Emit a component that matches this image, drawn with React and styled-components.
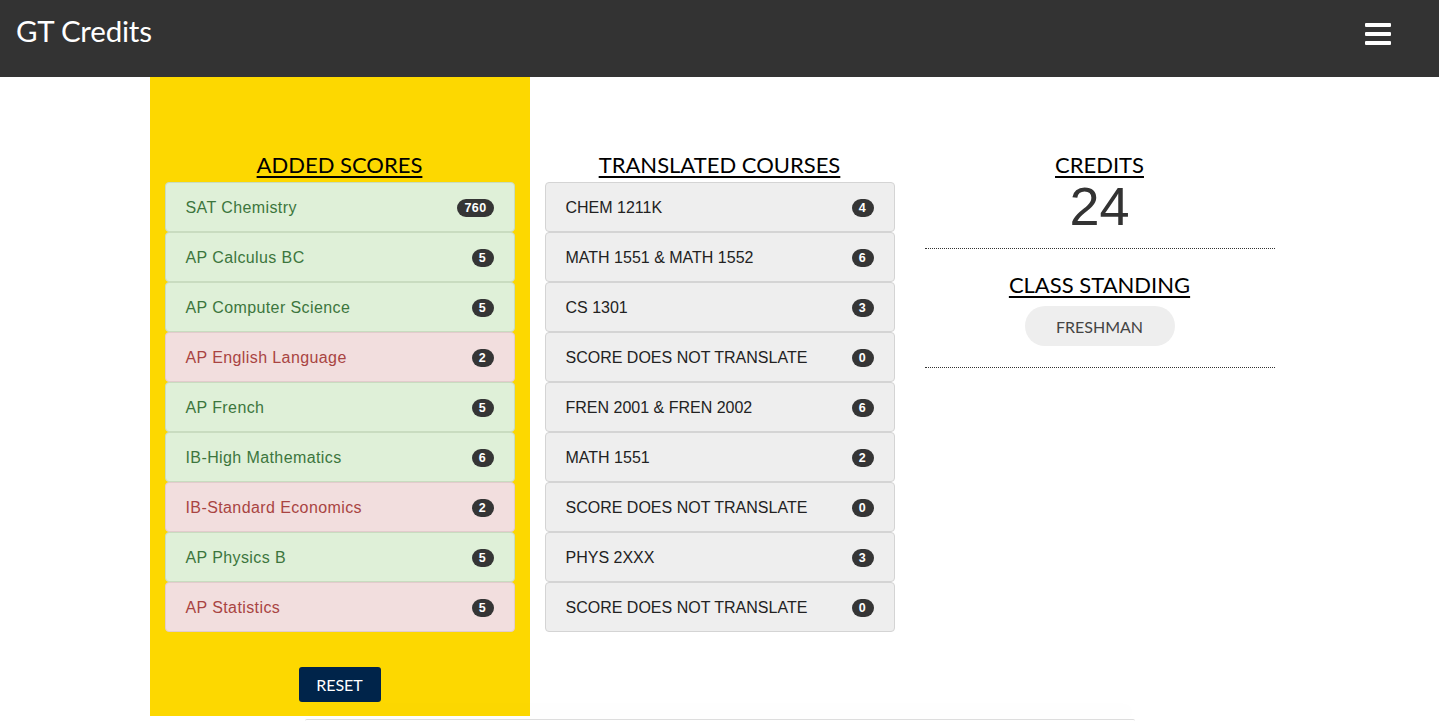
import React from "react";
import styled, { createGlobalStyle } from "styled-components";

const Global = createGlobalStyle`
  html, body { margin: 0; padding: 0; background: #fff; }
  body { font-family: "Liberation Sans", Arial, sans-serif; color: #333; overflow: hidden; }
  * { box-sizing: border-box; }
`;

const Header = styled.header`
  height: 77px;
  background: #333;
  display: flex;
  justify-content: space-between;
  align-items: flex-start;
  padding: 13px 48px 0 16px;
`;

const Brand = styled.div`
  color: #fff;
  font-family: "Lato", "Open Sans", sans-serif;
  font-size: 29.5px;
  letter-spacing: -0.2px;
  line-height: 36px;
`;

const Burger = styled.button`
  margin-top: 10px;
  width: 26px;
  height: 22px;
  padding: 0;
  border: 0;
  background: transparent;
  display: flex;
  flex-direction: column;
  justify-content: space-between;
  span { display: block; height: 4px; background: #fff; border-radius: 1px; }
`;

const Container = styled.main`
  width: 1140px;
  margin: 0 auto;
  display: grid;
  grid-template-columns: repeat(3, 380px);
  align-items: start;
`;

const Column = styled.section`
  padding: 74px 15px 0;
  background: ${(p) => (p.$highlight ? "#fdd800" : "transparent")};
  height: ${(p) => (p.$highlight ? "639px" : "auto")};
  display: flex;
  flex-direction: column;
  align-items: stretch;
`;

const Heading = styled.h2`
  margin: 0 0 3px;
  font-family: "Lato", "Open Sans", sans-serif;
  font-weight: 400;
  font-size: 22px;
  line-height: 28px;
  color: #000;
  text-align: center;
  text-decoration: underline;
  text-underline-offset: 3px;
  text-decoration-thickness: 2px;
`;

const List = styled.ul`
  list-style: none;
  margin: 0;
  padding: 0;
`;

const tones = {
  success: { bg: "#dff0d8", fg: "#3c763d", border: "#c9dcc0" },
  danger: { bg: "#f2dede", fg: "#a94442", border: "#e2cccc" },
  plain: { bg: "#eeeeee", fg: "#222", border: "#d4d4d4" },
};

const Item = styled.li`
  height: 50px;
  padding: 1px 20px 0;
  display: flex;
  align-items: center;
  justify-content: space-between;
  background: ${(p) => tones[p.$tone].bg};
  color: ${(p) => tones[p.$tone].fg};
  border: 1px solid ${(p) => tones[p.$tone].border};
  border-radius: 4px;
  font-size: 16px;
  letter-spacing: ${(p) => (p.$tone === "plain" ? "0" : "0.4px")};
`;

const Badge = styled.span`
  background: #353535;
  color: #fff;
  font-size: 12.5px;
  font-weight: 700;
  line-height: 18px;
  letter-spacing: 0.4px;
  min-width: 22px;
  height: 18px;
  padding: 0 7px;
  border-radius: 9px;
  text-align: center;
`;

const ResetRow = styled.div`
  margin-top: 35px;
  display: flex;
  justify-content: center;
`;

const ResetButton = styled.button`
  background: #00244a;
  color: #fff;
  border: 0;
  border-radius: 3px;
  width: 82px;
  height: 35px;
  font-family: "Lato", "Open Sans", sans-serif;
  font-size: 16px;
`;

const Stat = styled.div`
  font-family: "Liberation Sans", Arial, sans-serif;
  font-size: 54px;
  line-height: 48px;
  text-align: center;
  color: #333;
`;

const Rule = styled.hr`
  width: 100%;
  margin: 18px 0 22px;
  border: 0;
  border-top: 1px dotted #333;
`;

const Pill = styled.div`
  align-self: center;
  width: 150px;
  height: 40px;
  border-radius: 20px;
  background: #eee;
  display: flex;
  align-items: center;
  justify-content: center;
  font-family: "Lato", "Open Sans", sans-serif;
  font-size: 16px;
  color: #444;
  margin-top: 4px;
`;

const Rule2 = styled(Rule)`
  margin-top: 21px;
`;

const Footer = styled.footer`
  width: 830px;
  height: 2px;
  margin: 3px auto 0;
  border-top: 1px solid #ddd;
  border-radius: 6px 6px 0 0;
  box-shadow: 0 -8px 18px rgba(0, 0, 0, 0.07);
  background: #fff;
  position: relative;
`;

const scores = [
  ["SAT Chemistry", "760", "success"],
  ["AP Calculus BC", "5", "success"],
  ["AP Computer Science", "5", "success"],
  ["AP English Language", "2", "danger"],
  ["AP French", "5", "success"],
  ["IB-High Mathematics", "6", "success"],
  ["IB-Standard Economics", "2", "danger"],
  ["AP Physics B", "5", "success"],
  ["AP Statistics", "5", "danger"],
];

const courses = [
  ["CHEM 1211K", "4"],
  ["MATH 1551 & MATH 1552", "6"],
  ["CS 1301", "3"],
  ["SCORE DOES NOT TRANSLATE", "0"],
  ["FREN 2001 & FREN 2002", "6"],
  ["MATH 1551", "2"],
  ["SCORE DOES NOT TRANSLATE", "0"],
  ["PHYS 2XXX", "3"],
  ["SCORE DOES NOT TRANSLATE", "0"],
];

export default function App() {
  return (
    <>
      <Global />
      <Header>
        <Brand>GT Credits</Brand>
        <Burger aria-label="menu">
          <span />
          <span />
          <span />
        </Burger>
      </Header>
      <Container>
        <Column $highlight>
          <Heading>ADDED SCORES</Heading>
          <List>
            {scores.map(([name, score, tone], i) => (
              <Item key={i} $tone={tone}>
                <span>{name}</span>
                <Badge>{score}</Badge>
              </Item>
            ))}
          </List>
          <ResetRow>
            <ResetButton>RESET</ResetButton>
          </ResetRow>
        </Column>
        <Column>
          <Heading>TRANSLATED COURSES</Heading>
          <List>
            {courses.map(([name, credits], i) => (
              <Item key={i} $tone="plain">
                <span>{name}</span>
                <Badge>{credits}</Badge>
              </Item>
            ))}
          </List>
        </Column>
        <Column>
          <Heading>CREDITS</Heading>
          <Stat>24</Stat>
          <Rule />
          <Heading>CLASS STANDING</Heading>
          <Pill>FRESHMAN</Pill>
          <Rule2 />
        </Column>
      </Container>
      <Footer />
    </>
  );
}
